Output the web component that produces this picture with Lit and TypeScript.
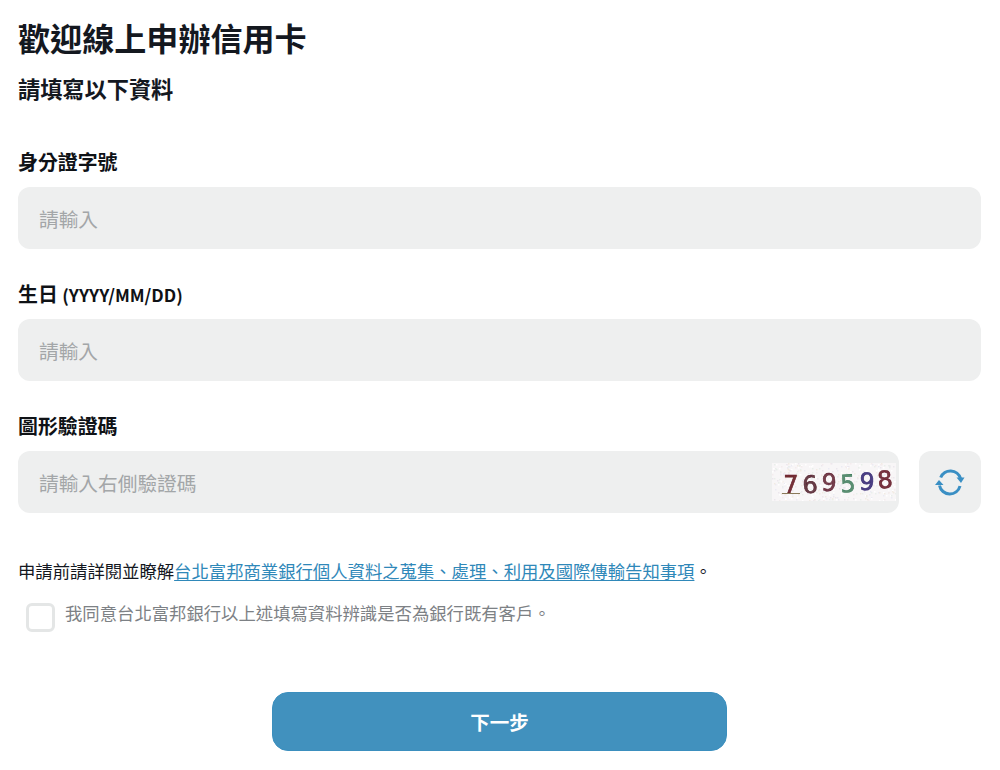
import { LitElement, html, css, svg } from "lit";
import { customElement } from "lit/decorators.js";

const DIGITS: [string, string, number, number, number][] = [
  ["7", "#5f1119", 19, 30, 0],
  ["6", "#4f1c28", 38, 30, -4],
  ["9", "#5f2030", 57, 28, 3],
  ["5", "#3f7d5c", 76, 29, -3],
  ["9", "#2f2270", 95, 27, 4],
  ["8", "#601420", 113, 25, -6],
];

const NOISE_COLORS = ["#ece7ed", "#f2ebe3", "#e9efeb", "#ebebf4", "#f4eced", "#ffffff", "#ffffff"];
const noise: { x: number; y: number; c: string }[] = [];
let seed = 17;
const rnd = () => (seed = (seed * 16807) % 2147483647) / 2147483647;
for (let i = 0; i < 420; i++) {
  noise.push({
    x: Math.floor(rnd() * 124),
    y: Math.floor(rnd() * 38),
    c: NOISE_COLORS[Math.floor(rnd() * NOISE_COLORS.length)],
  });
}

@customElement("app-root")
export class AppRoot extends LitElement {
  static styles = css`
    :host {
      display: block;
      width: 1000px;
      height: 770px;
      overflow: hidden;
      background: #fff;
      box-sizing: border-box;
      padding: 18px 19px 0 18px;
      font-family: "Noto Sans CJK TC", "Noto Sans", sans-serif;
      color: #14181f;
    }
    h1 {
      margin: 0;
      font-size: 32.1px;
      line-height: 38px;
      font-weight: 700;
    }
    h2 {
      margin: 16px 0 0;
      font-size: 22.2px;
      line-height: 32px;
      font-weight: 700;
    }
    .form {
      display: flex;
      flex-direction: column;
      gap: 33px;
      margin-top: 46px;
    }
    .field {
      display: flex;
      flex-direction: column;
      gap: 13px;
    }
    label.title {
      display: block;
      height: 24px;
      font-size: 19.9px;
      line-height: 24px;
      font-weight: 700;
      color: #0f1216;
    }
    .hint {
      font-size: 17.4px;
      line-height: 1;
    }
    .input {
      height: 62px;
      box-sizing: border-box;
      display: flex;
      align-items: center;
      justify-content: space-between;
      padding: 0 3px 0 21px;
      border-radius: 12px;
      background: #eeefef;
      color: #a3a6a8;
      font-size: 19.7px;
    }
    .row {
      display: flex;
      gap: 20px;
    }
    .row .input {
      flex: 1;
    }
    .captcha {
      display: block;
      width: 124px;
      height: 38px;
    }
    .captcha text {
      font-family: "DejaVu Sans", sans-serif;
      font-size: 24px;
      stroke-width: 0.6;
      fill-opacity: 0.85;
    }
    .refresh {
      width: 62px;
      height: 62px;
      border-radius: 12px;
      background: #eeefef;
      border: 0;
      padding: 0;
      display: flex;
      align-items: center;
      justify-content: center;
    }
    .refresh svg {
      display: block;
    }
    .notice {
      margin: 45px 0 0;
      font-size: 17.35px;
      line-height: 26px;
      color: #14181f;
    }
    .notice a {
      color: #2f88b9;
      text-decoration: underline;
      text-underline-offset: 2px;
    }
    .agree {
      display: flex;
      align-items: flex-start;
      gap: 10px;
      margin-top: 16px;
      padding-left: 8px;
      font-size: 17.35px;
      line-height: 26px;
      color: #7d8185;
    }
    .box {
      width: 29px;
      height: 29px;
      margin-top: 3px;
      box-sizing: border-box;
      flex: none;
      border: 3px solid #e4e6e6;
      border-radius: 6px;
      background: #fff;
    }
    .actions {
      display: flex;
      justify-content: center;
      margin-top: 60px;
    }
    button.next {
      width: 455px;
      height: 59px;
      box-sizing: border-box;
      border: 1px solid #3b8fbe;
      border-radius: 16px;
      background: #4191be;
      color: #fff;
      font-family: inherit;
      font-size: 19.5px;
      font-weight: 700;
      padding: 0;
    }
  `;

  render() {
    return html`
      <h1>歡迎線上申辦信用卡</h1>
      <h2>請填寫以下資料</h2>
      <div class="form">
        <div class="field">
          <label class="title">身分證字號</label>
          <div class="input">請輸入</div>
        </div>
        <div class="field">
          <label class="title">生日 <span class="hint">(YYYY/MM/DD)</span></label>
          <div class="input">請輸入</div>
        </div>
        <div class="field">
          <label class="title">圖形驗證碼</label>
          <div class="row">
            <div class="input">
              <span>請輸入右側驗證碼</span>
              <svg class="captcha" viewBox="0 0 124 38">
                <defs><filter id="soft"><feGaussianBlur stdDeviation="0.3"></feGaussianBlur></filter></defs>
                <rect width="124" height="38" fill="#f8f6f7"></rect>
                ${noise.map((n) => svg`<rect x=${n.x} y=${n.y} width="1.5" height="1.5" fill=${n.c}></rect>`)}
                <g filter="url(#soft)">
                  ${DIGITS.map(
                    ([d, c, x, y, r]) =>
                      svg`<text x=${x} y=${y} fill=${c} stroke=${c} text-anchor="middle" transform="rotate(${r} ${x} ${y - 9})">${d}</text>`
                  )}
                  <rect x="10" y="30" width="18" height="1" fill="#8a7a5a"></rect>
                </g>
              </svg>
            </div>
            <div class="refresh">
              <svg width="30" height="28" viewBox="0 0 30 28" fill="none" stroke="#3a8fc4" stroke-width="3">
                <path d="M5.7 9.5 A10.5 10.5 0 0 1 25.5 10.5"></path>
                <path d="M25 18 A10.5 10.5 0 0 1 4.5 17.5"></path>
                <path d="M21.5 9.5 L26 15 L29.5 9.5 Z" fill="#3a8fc4" stroke="none"></path>
                <path d="M0 17 L4 12 L8.5 17 Z" fill="#3a8fc4" stroke="none"></path>
              </svg>
            </div>
          </div>
        </div>
      </div>
      <p class="notice">申請前請詳閱並瞭解<a>台北富邦商業銀行個人資料之蒐集、處理、利用及國際傳輸告知事項</a>。</p>
      <div class="agree">
        <span class="box"></span>
        <span>我同意台北富邦銀行以上述填寫資料辨識是否為銀行既有客戶。</span>
      </div>
      <div class="actions"><button class="next">下一步</button></div>
    `;
  }
}
